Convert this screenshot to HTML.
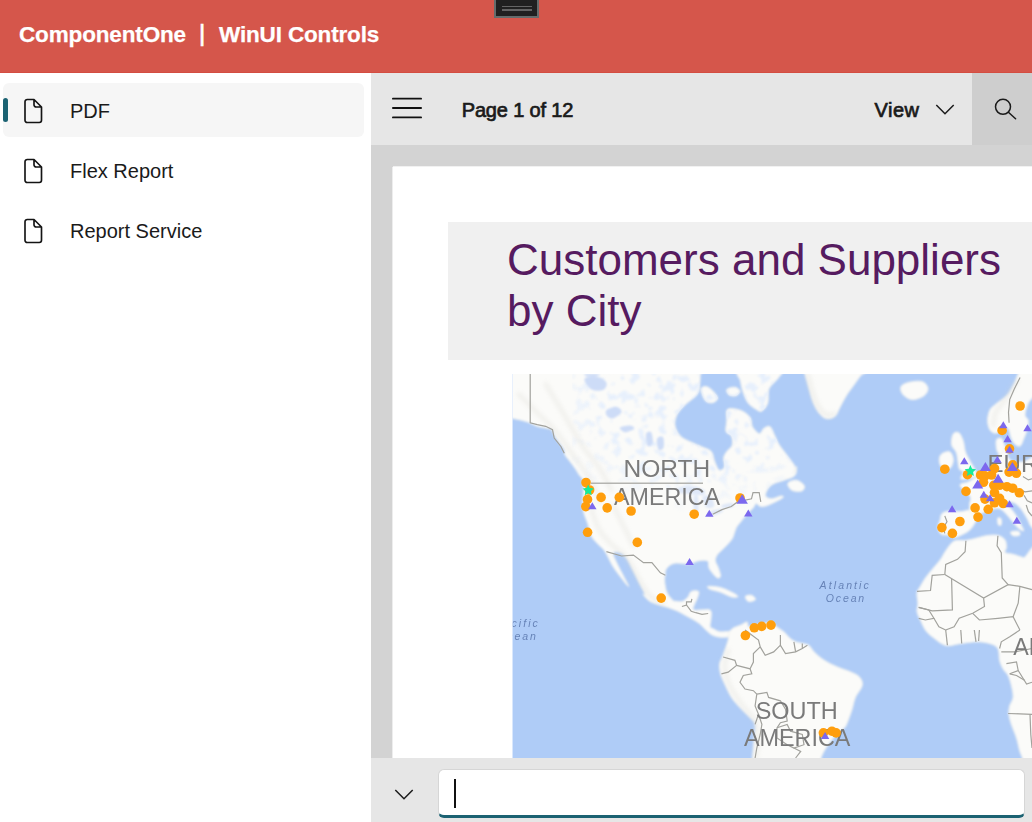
<!DOCTYPE html>
<html lang="en">
<head>
<meta charset="utf-8">
<title>ComponentOne | WinUI Controls</title>
<style>
  html, body { margin: 0; padding: 0; }
  body {
    width: 1032px; height: 822px; overflow: hidden; position: relative;
    background: #ffffff;
    font-family: "Liberation Sans", sans-serif;
    color: #1a1a1a;
  }
  .abs { position: absolute; }
  #header { left: 0; top: 0; width: 1032px; height: 73px; background: #D5564B; box-sizing: border-box; border-bottom: 1px solid #d44d41; }
  #title, .ttl {
    left: 19px; top: 19.500px; height: 30px; line-height: 30px; white-space: nowrap;
    color: #ffffff; font-weight: bold; font-size: 22.500px; letter-spacing: -0.15px; -webkit-text-stroke: 0.25px #ffffff;
  }
  #grip { left: 494px; top: -2px; width: 41px; height: 16px; background: #202020; border: 2px solid #646c6c; }
  #grip i { position: absolute; left: 6px; width: 30px; height: 1.700px; background: #646464; }
  #nav { left: 0; top: 73px; width: 371px; height: 749px; background: #ffffff; }
  .item { position: absolute; left: 3px; width: 361px; height: 54px; border-radius: 6px; }
  .item.sel { background: #f6f6f6; }
  .item .bar { position: absolute; left: 0; top: 15px; width: 5px; height: 24px; border-radius: 3px; background: #1b6272; }
  .item svg { position: absolute; left: 17px; top: 15px; }
  .item span { position: absolute; left: 67px; top: 13px; line-height: 30px; font-size: 20px; white-space: nowrap; }
  #toolbar { left: 371px; top: 73px; width: 661px; height: 72px; background: #e6e6e6; }
  #searchbtn { left: 972px; top: 73px; width: 60px; height: 72px; background: #cecece; }
  #content { left: 371px; top: 145px; width: 661px; height: 613px; background: #d3d3d3; overflow: hidden; }
  #page { left: 393px; top: 167px; width: 639px; height: 591px; background: #ffffff; box-shadow: -1px 0 0 #ededed, 0 -1px 0 #f1f1f1; }
  #banner { left: 448px; top: 222px; width: 584px; height: 138.4px; background: #f0f0f0; }
  #h1 {
    left: 507px; top: 235px; font-size: 44px; line-height: 50.6px; color: #561b60; white-space: nowrap;
  }
  #map { left: 512px; top: 374px; width: 520px; height: 384px; background: #aecbf6; overflow: hidden; }
  #bottom { left: 371px; top: 758px; width: 661px; height: 64px; background: #e6e6e6; }
  #input { left: 437.600px; top: 769.400px; width: 587.700px; height: 48.500px; box-sizing: border-box; background: #ffffff;
     border: 1.300px solid #d6d6d6; border-bottom: 3px solid #1b6272; border-radius: 6px; }
  #caret { left: 454px; top: 779px; width: 2px; height: 29px; background: #111; }
  .tb { font-size: 20px; font-weight: normal; -webkit-text-stroke: 0.700px #1a1a1a; color: #1a1a1a; white-space: nowrap; line-height: 30px; }
</style>
</head>
<body>
<div id="header" class="abs"></div>
<div id="title" class="abs">ComponentOne</div>
<div class="abs ttl" style="left:199px;top:17.500px;font-weight:normal;-webkit-text-stroke:0.700px #fff;font-size:24px">|</div>
<div class="abs ttl" style="left:219px">WinUI Controls</div>
<div id="grip" class="abs"><i style="top:5.800px"></i><i style="top:9px"></i></div>

<div id="nav" class="abs">
  <div class="item sel" style="top:10px"><div class="bar"></div>
    <svg width="24" height="26" viewBox="0 0 24 26" fill="none" stroke="#141414" stroke-width="1.650" stroke-linejoin="round"><path d="M7.200 1.500H14L21.500 9V22.300A2.200 2.200 0 0 1 19.300 24.500H7.200A2.200 2.200 0 0 1 5 22.300V3.700A2.200 2.200 0 0 1 7.200 1.500ZM14 1.500V6.800A2.200 2.200 0 0 0 16.200 9H21.500"/></svg>
    <span>PDF</span></div>
  <div class="item" style="top:70px">
    <svg width="24" height="26" viewBox="0 0 24 26" fill="none" stroke="#141414" stroke-width="1.650" stroke-linejoin="round"><path d="M7.200 1.500H14L21.500 9V22.300A2.200 2.200 0 0 1 19.300 24.500H7.200A2.200 2.200 0 0 1 5 22.300V3.700A2.200 2.200 0 0 1 7.200 1.500ZM14 1.500V6.800A2.200 2.200 0 0 0 16.200 9H21.500"/></svg>
    <span>Flex Report</span></div>
  <div class="item" style="top:130px">
    <svg width="24" height="26" viewBox="0 0 24 26" fill="none" stroke="#141414" stroke-width="1.650" stroke-linejoin="round"><path d="M7.200 1.500H14L21.500 9V22.300A2.200 2.200 0 0 1 19.300 24.500H7.200A2.200 2.200 0 0 1 5 22.300V3.700A2.200 2.200 0 0 1 7.200 1.500ZM14 1.500V6.800A2.200 2.200 0 0 0 16.200 9H21.500"/></svg>
    <span>Report Service</span></div>
</div>

<div id="toolbar" class="abs"></div>
<div id="searchbtn" class="abs"></div>
<svg class="abs" style="left:391px;top:97px" width="32" height="22" viewBox="0 0 32 22" stroke="#111" stroke-width="1.800" stroke-linecap="round" fill="none"><path d="M1.900 1.700H30.100M1.900 11H30.100M1.900 20.400H30.100"/></svg>
<div class="abs tb" style="left:461.700px;top:95.200px;letter-spacing:-0.15px">Page 1 of 12</div>
<div class="abs tb" style="left:874.500px;top:94.800px;letter-spacing:0.5px">View</div>
<svg class="abs" style="left:935px;top:103px" width="20" height="13" viewBox="0 0 20 13" stroke="#1a1a1a" stroke-width="1.500" fill="none"><path d="M1.300 2L10 10.700L18.700 2"/></svg>
<svg class="abs" style="left:992px;top:96px" width="26" height="26" viewBox="0 0 26 26" stroke="#1a1a1a" stroke-width="1.500" fill="none" stroke-linecap="round"><circle cx="11" cy="10.800" r="7.500"/><path d="M16.400 16.200L23.600 22.700"/></svg>

<div id="content" class="abs"></div>
<div id="page" class="abs"></div>
<div id="banner" class="abs"></div>
<div id="h1" class="abs">Customers and Suppliers<br>by City</div>
<div id="map" class="abs">
<svg id="mapsvg" width="520" height="384" viewBox="0 0 520 384" style="display:block">
<defs><filter id="b1" x="-5%" y="-5%" width="110%" height="110%"><feGaussianBlur stdDeviation="1.1"/></filter><filter id="b2"><feGaussianBlur stdDeviation="0.6"/></filter> <filter id="sp" x="0" y="0" width="100%" height="100%"><feTurbulence type="fractalNoise" baseFrequency="0.11" numOctaves="2" seed="7" result="n"/><feColorMatrix in="n" type="matrix" values="0 0 0 0 0.80  0 0 0 0 0.87  0 0 0 0 0.975  0 0 0 8 -4.3"/><feGaussianBlur stdDeviation="0.8"/></filter><radialGradient id="spg" cx="0.55" cy="0.3" r="0.7"><stop offset="0.6" stop-color="#fff"/><stop offset="1" stop-color="#000"/></radialGradient><mask id="spm" maskUnits="userSpaceOnUse" x="60" y="-10" width="225" height="150"><rect x="60" y="-10" width="225" height="150" fill="url(#spg)"/></mask><filter id="b3" x="-20%" y="-20%" width="140%" height="140%"><feGaussianBlur stdDeviation="2.2"/></filter></defs>
<rect x="0" y="0" width="520" height="384" fill="#afccf7"/>
<g filter="url(#b1)" fill="#fbfbf9" stroke="#f3f3ef" stroke-width="1">
<path d="M-6.0 -6.0C26.5 -14.3 156.1 -7.2 188.5 -6.2C220.8 -5.2 188.3 -2.6 188.2 0.0C188.0 2.6 188.2 5.9 187.7 9.3C187.2 12.7 187.8 16.5 185.4 20.2C182.9 23.8 176.3 27.6 173.0 31.0C169.6 34.4 166.9 37.0 165.2 40.3C163.5 43.7 162.4 47.5 162.9 51.2C163.4 54.8 165.6 59.2 168.3 62.0C171.0 64.9 175.5 66.4 179.2 68.2C182.8 70.0 186.7 71.3 190.0 72.9C193.4 74.4 197.3 75.2 199.3 77.5C201.4 79.8 201.1 83.7 202.4 86.8C203.7 89.9 205.4 95.1 207.1 96.1C208.7 97.2 211.7 95.1 212.5 93.0C213.3 91.0 211.3 86.3 211.7 83.7C212.1 81.1 213.4 79.6 214.8 77.5C216.2 75.5 219.5 73.9 220.2 71.3C221.0 68.7 220.5 64.3 219.5 62.0C218.4 59.7 214.8 59.9 214.0 57.4C213.3 54.8 214.6 50.2 214.8 46.5C215.1 42.8 213.3 37.0 215.6 35.3C217.9 33.7 225.0 35.1 228.8 36.4C232.5 37.8 236.1 40.7 238.1 43.4C240.0 46.1 238.9 50.0 240.4 52.7C242.0 55.4 245.4 59.4 247.4 59.7C249.3 59.9 250.2 55.4 252.0 54.3C253.8 53.1 256.4 51.4 258.2 52.7C260.0 54.0 261.3 58.9 262.9 62.0C264.4 65.1 265.2 67.7 267.5 71.3C269.9 74.9 274.3 80.1 276.8 83.7C279.4 87.3 282.3 90.4 283.0 93.0C283.8 95.6 281.3 99.4 281.5 99.2C281.7 99.1 284.2 91.8 284.4 92.2C284.7 92.6 285.0 99.2 282.9 101.5C280.8 103.8 275.4 104.9 272.0 106.2C268.7 107.4 265.3 108.0 262.7 109.3C260.1 110.5 258.1 111.8 256.5 113.9C255.0 116.0 252.9 119.9 253.4 121.7C253.9 123.5 257.0 124.7 259.6 124.8C262.2 124.8 267.1 122.1 268.9 122.0C270.7 121.8 272.5 122.5 270.5 124.0C268.4 125.5 260.1 129.5 256.5 131.0C252.9 132.4 250.8 132.8 248.8 132.5C246.7 132.3 245.4 129.2 244.1 129.4C242.8 129.7 242.6 132.3 241.0 134.1C239.5 135.9 236.9 137.9 234.8 140.3C232.8 142.6 230.4 145.7 228.6 148.0C226.8 150.3 225.3 151.6 224.0 154.2C222.7 156.8 222.2 160.9 220.9 163.5C219.6 166.1 218.0 167.7 216.2 169.7C214.4 171.8 211.8 174.1 210.0 175.9C208.2 177.7 206.5 178.8 205.4 180.6C204.3 182.4 203.1 184.4 203.3 186.8C203.6 189.1 205.8 191.9 206.6 194.5C207.5 197.1 208.8 200.8 208.5 202.3C208.2 203.8 206.6 204.8 204.7 203.5C202.9 202.2 198.8 197.3 197.3 194.5C195.8 191.8 197.5 188.4 195.8 187.1C194.0 185.8 189.8 186.3 186.8 186.8C183.7 187.2 181.3 189.5 177.5 189.9C173.6 190.3 167.1 188.6 163.5 189.1C159.9 189.6 157.6 191.3 155.8 193.0C153.9 194.7 153.0 198.2 152.7 199.2C152.3 200.2 153.4 197.5 153.4 198.8C153.4 200.2 152.3 203.9 152.6 207.2C152.9 210.6 153.6 215.7 155.1 219.0C156.7 222.4 160.7 226.1 161.9 227.5C163.0 228.8 160.8 227.1 162.1 227.1C163.4 227.1 167.5 228.2 169.9 227.6C172.2 226.9 174.5 224.6 176.1 222.9C177.6 221.2 177.4 218.4 179.2 217.5C180.9 216.6 185.6 216.3 186.6 217.5C187.6 218.7 185.8 222.6 185.1 224.8C184.3 227.0 182.9 228.8 182.3 230.7C181.7 232.5 180.2 235.0 181.5 235.9C182.8 236.8 187.2 235.8 190.0 235.9C192.9 236.0 197.0 234.9 198.5 236.4C200.0 237.9 199.1 242.3 199.0 244.9C198.9 247.6 197.6 250.7 198.1 252.4C198.5 254.0 200.1 254.1 201.6 255.0C203.2 255.9 205.2 257.3 207.4 257.8C209.6 258.2 212.8 257.7 214.8 257.6C216.8 257.6 218.9 256.5 219.5 257.3C220.0 258.1 220.0 261.3 218.2 262.3C216.4 263.3 211.6 263.4 208.6 263.2C205.6 263.0 202.7 262.3 200.2 261.0C197.8 259.8 195.9 257.7 193.7 255.8C191.6 253.9 189.8 251.4 187.5 249.6C185.3 247.8 182.6 246.4 180.1 244.9C177.6 243.5 175.1 242.2 172.7 240.9C170.2 239.5 168.0 238.1 165.2 236.9C162.4 235.6 159.3 234.6 155.9 233.4C152.5 232.3 148.2 231.3 145.1 230.2C142.0 229.1 139.6 228.6 137.3 226.9C135.0 225.3 131.8 221.5 131.1 220.4C130.4 219.3 133.8 222.3 133.2 220.4C132.6 218.5 129.3 212.8 127.3 208.9C125.3 205.1 123.5 201.2 121.4 197.1C119.3 193.1 116.9 187.6 114.7 184.5C112.4 181.4 110.2 179.4 107.9 178.6C105.7 177.7 101.5 177.3 101.2 179.4C100.8 181.5 104.1 187.4 105.9 191.2C107.6 195.0 109.8 198.6 111.6 202.2C113.4 205.8 117.1 212.4 116.7 212.6C116.3 212.9 111.9 207.3 109.3 203.9C106.6 200.4 103.6 196.6 100.8 192.1C98.1 187.6 95.2 180.5 92.7 176.9C90.3 173.2 88.2 172.7 86.0 170.2C83.7 167.6 80.9 165.1 79.2 161.7C77.6 158.3 77.1 153.9 75.9 149.9C74.6 146.0 72.5 141.8 71.7 138.1C70.8 134.5 70.8 131.9 70.8 128.0C70.8 124.1 71.7 118.4 71.7 114.7C71.7 110.9 71.5 107.6 70.8 105.4C70.1 103.1 68.7 103.0 67.4 101.2C66.2 99.3 64.8 96.7 63.2 94.4C61.7 92.2 59.9 89.9 58.2 87.7C56.5 85.4 54.1 82.9 53.1 80.9C52.1 79.0 53.0 77.6 52.3 75.9C51.6 74.2 50.4 73.1 48.9 70.8C47.3 68.6 44.5 64.9 43.0 62.4C41.4 59.9 41.2 57.0 39.6 55.6C38.1 54.2 36.1 54.5 33.7 54.0C31.3 53.4 27.9 53.1 25.3 52.3C22.7 51.4 20.7 49.9 18.2 48.9C15.7 47.9 13.2 47.2 10.1 46.4C7.1 45.6 2.8 44.7 0.0 44.2C-2.8 43.7 -5.7 51.9 -6.7 43.5C-7.7 35.1 -38.5 2.3 -6.0 -6.0Z"/>
<path d="M189.2 14.7C189.8 12.5 193.5 11.8 196.2 13.2C198.9 14.6 204.7 20.7 205.5 23.3C206.3 25.8 202.9 28.2 200.9 28.7C198.8 29.2 195.1 28.7 193.1 26.4C191.2 24.0 188.7 16.9 189.2 14.7Z"/>
<path d="M214.8 15.5C215.7 14.2 220.4 12.9 222.6 13.2C224.8 13.4 227.7 15.6 228.0 17.1C228.3 18.5 225.9 21.1 224.1 21.7C222.3 22.4 218.7 22.0 217.1 20.9C215.6 19.9 213.9 16.8 214.8 15.5Z"/>
<path d="M227.2 -4.7C233.9 -6.6 261.7 -6.0 268.3 -4.7C274.9 -3.3 268.6 0.2 266.8 3.4C264.9 6.6 258.8 10.5 257.0 14.7C255.2 19.0 257.0 25.2 255.8 29.0C254.5 32.7 251.7 36.2 249.7 37.2C247.7 38.2 245.7 36.3 243.5 35.0C241.3 33.7 238.3 31.4 236.5 29.5C234.8 27.5 234.1 25.6 233.1 23.3C232.1 20.9 231.1 18.2 230.3 15.5C229.6 12.8 229.0 10.3 228.5 7.0C227.9 3.6 220.6 -2.7 227.2 -4.7Z"/>
<path d="M292.0 -6.7C302.5 -7.9 346.7 -8.1 356.1 -6.7C365.5 -5.3 350.9 -1.1 348.7 1.7C346.4 4.5 345.0 6.7 342.6 10.1C340.2 13.5 336.6 18.0 334.2 21.9C331.7 25.9 329.6 30.3 327.8 33.7C325.9 37.1 325.4 40.3 323.2 42.2C321.1 44.0 317.4 45.1 314.8 44.7C312.2 44.3 309.8 42.3 307.5 39.6C305.3 37.0 303.1 33.0 301.3 28.7C299.5 24.3 298.1 18.3 296.7 13.5C295.4 8.7 293.8 3.4 293.0 0.0C292.2 -3.4 281.5 -5.6 292.0 -6.7Z"/>
<path d="M275.9 109.3C276.7 107.6 281.7 105.8 284.4 106.2C287.1 106.5 291.3 109.8 292.2 111.6C293.1 113.4 291.9 116.2 289.9 117.0C287.8 117.8 282.1 117.5 279.8 116.2C277.5 114.9 275.1 110.9 275.9 109.3Z"/>
<path d="M389.0 12.6C390.0 10.7 393.1 9.3 396.6 8.4C400.1 7.6 406.8 6.6 410.1 7.6C413.3 8.6 415.7 11.9 416.0 14.3C416.3 16.7 414.4 20.0 411.8 21.9C409.1 23.8 403.5 25.9 400.0 25.6C396.4 25.3 392.5 22.4 390.7 20.2C388.9 18.1 388.0 14.6 389.0 12.6Z"/>
<path d="M196.2 212.4C198.0 212.1 204.5 212.5 208.6 213.6C212.8 214.7 218.1 217.4 221.0 218.9C223.9 220.4 226.2 221.9 226.0 222.6C225.7 223.3 222.4 223.6 219.5 222.9C216.6 222.2 212.2 219.5 208.6 218.2C205.0 217.0 199.8 216.1 197.8 215.1C195.7 214.2 194.4 212.6 196.2 212.4Z"/>
<path d="M233.4 222.4C233.9 221.4 237.9 220.8 239.6 221.3C241.3 221.9 244.0 224.5 243.5 225.5C243.0 226.6 238.2 228.1 236.5 227.6C234.8 227.0 232.9 223.5 233.4 222.4Z"/>
<path d="M217.1 258.9C218.0 256.9 219.1 255.5 221.0 254.2C223.0 252.9 226.4 252.1 228.8 251.1C231.1 250.1 233.7 247.8 235.0 248.0C236.3 248.3 235.2 252.1 236.5 252.7C237.8 253.2 240.1 251.6 242.7 251.1C245.3 250.6 249.2 250.1 252.0 249.6C254.9 249.0 257.7 247.5 259.8 248.0C261.9 248.5 262.4 251.0 264.4 252.7C266.5 254.3 270.0 256.2 272.2 258.1C274.4 260.0 275.7 262.4 277.6 264.0C279.6 265.6 281.4 266.9 283.8 267.9C286.2 268.8 289.8 269.2 292.0 269.8C294.2 270.4 295.4 270.2 297.1 271.5C298.8 272.9 299.6 275.4 302.1 277.9C304.7 280.4 308.3 283.8 312.3 286.3C316.2 288.9 321.2 291.1 325.7 293.1C330.2 295.1 335.6 296.5 339.2 298.2C342.9 299.8 345.8 301.0 347.7 303.2C349.5 305.5 350.9 308.3 350.2 311.6C349.5 315.0 345.1 319.5 343.4 323.4C341.8 327.4 341.3 331.3 340.1 335.2C338.8 339.2 337.1 344.0 335.9 347.0C334.6 350.1 334.5 351.5 332.5 353.8C330.5 356.0 326.3 358.3 324.1 360.5C321.8 362.8 320.7 365.0 319.0 367.3C317.3 369.5 315.6 371.2 313.9 374.0C312.3 376.8 310.0 380.6 308.9 384.0C307.8 387.3 318.6 392.5 307.2 394.3C295.8 396.0 251.7 396.0 240.6 394.3C229.5 392.5 240.5 387.3 240.6 384.0C240.7 380.6 241.2 377.4 241.4 374.0C241.7 370.7 242.0 367.8 242.3 363.9C242.6 360.0 243.8 353.8 243.1 350.4C242.4 347.0 240.6 346.5 238.1 343.7C235.5 340.9 231.0 336.9 228.0 333.6C224.9 330.2 222.1 327.4 219.5 323.4C217.0 319.5 214.6 313.9 212.8 310.0C211.0 306.0 209.4 303.2 208.6 299.8C207.7 296.5 207.3 292.8 207.7 289.7C208.1 286.6 209.7 285.2 211.1 281.3C212.5 277.4 215.1 269.9 216.2 266.1C217.2 262.4 216.3 260.9 217.1 258.9Z"/>
<path d="M442.1 167.1C445.5 165.4 450.3 166.9 453.9 166.4C457.6 166.0 460.7 165.0 464.0 164.2C467.4 163.5 470.5 162.2 474.1 161.7C477.8 161.2 482.8 160.7 485.9 161.4C489.1 162.1 491.6 163.9 493.0 165.9C494.4 168.0 494.4 171.4 494.4 173.5C494.4 175.6 491.9 177.5 493.0 178.6C494.1 179.7 498.1 179.4 501.1 180.3C504.2 181.1 506.7 182.2 511.2 183.6C515.7 185.0 525.3 153.6 528.1 188.7C530.9 223.8 530.8 360.0 528.1 394.3C525.4 428.5 515.0 396.0 512.1 394.3C509.1 392.5 511.1 386.8 510.4 384.0C509.7 381.2 508.8 380.7 507.9 377.4C506.9 374.1 505.9 368.4 504.5 363.9C503.1 359.4 500.7 354.4 499.4 350.4C498.2 346.5 497.2 343.4 496.9 340.3C496.6 337.2 497.0 334.7 497.7 331.9C498.4 329.1 500.8 326.8 501.1 323.4C501.4 320.1 500.3 315.3 499.4 311.6C498.6 308.0 497.5 304.3 496.1 301.5C494.7 298.7 492.4 297.3 491.0 294.8C489.6 292.3 488.5 289.7 487.6 286.3C486.8 283.0 487.6 277.4 485.9 274.5C484.3 271.7 481.2 270.6 477.5 269.5C473.9 268.4 469.1 267.7 464.0 267.8C459.0 267.9 452.2 269.2 447.2 269.8C442.1 270.4 438.2 272.7 433.7 271.5C429.2 270.3 423.6 265.3 420.2 262.7C416.8 260.2 415.4 258.8 413.4 256.0C411.5 253.2 409.8 249.1 408.4 246.0C407.0 243.0 405.4 240.4 405.0 237.6C404.6 234.8 405.9 232.3 405.9 229.2C405.9 226.1 404.6 221.9 405.0 219.0C405.4 216.2 407.0 214.8 408.4 212.3C409.8 209.8 411.5 206.7 413.4 203.9C415.4 201.1 417.7 198.5 420.2 195.4C422.7 192.4 426.4 188.4 428.6 185.3C430.9 182.2 431.4 179.9 433.7 176.9C435.9 173.9 438.7 168.9 442.1 167.1Z"/>
<path d="M429.9 139.7C431.3 138.2 433.5 137.6 436.5 137.2C439.5 136.9 444.5 138.0 448.2 137.8C451.8 137.6 455.4 135.8 458.4 136.1C461.4 136.4 465.7 137.5 466.4 139.7C467.2 141.9 464.3 146.4 462.8 149.2C461.2 152.0 459.4 154.6 457.2 156.5C455.0 158.5 452.1 159.7 449.6 160.9C447.2 162.1 444.5 163.5 442.3 163.5C440.1 163.6 438.7 161.7 436.5 161.2C434.3 160.6 430.9 161.4 429.2 160.2C427.4 158.9 426.2 155.9 426.0 153.6C425.8 151.3 427.4 148.6 428.0 146.3C428.7 144.0 428.5 141.2 429.9 139.7Z"/>
<path d="M448.2 110.5C448.9 109.3 453.3 109.2 455.5 108.3C457.7 107.4 459.5 106.1 461.3 105.1C463.1 104.1 464.8 103.3 466.4 102.2C468.0 101.2 469.2 100.0 470.8 98.8C472.4 97.7 474.1 96.5 475.9 95.2C477.7 93.9 480.0 92.6 481.8 91.1C483.5 89.6 485.2 89.2 486.1 86.4C487.1 83.7 486.4 77.2 487.6 74.8C488.8 72.3 492.0 70.4 493.4 71.8C494.9 73.3 494.9 80.8 496.4 83.5C497.8 86.2 499.8 87.2 502.2 87.9C504.6 88.6 506.1 88.1 510.9 87.9C515.8 87.7 528.0 74.5 531.4 86.4C534.8 98.4 533.3 148.2 531.4 159.4C529.5 170.6 522.7 156.0 520.0 153.6C517.3 151.2 517.2 148.0 515.3 144.8C513.5 141.7 510.9 137.3 508.8 134.6C506.6 131.9 504.5 130.0 502.2 128.8C499.9 127.6 495.8 126.8 494.9 127.3C494.0 127.8 495.3 129.9 496.6 132.0C498.0 134.1 501.0 136.8 502.9 139.7C504.9 142.6 506.9 146.7 508.3 149.5C509.8 152.4 512.0 156.0 511.7 156.8C511.4 157.6 508.4 155.8 506.6 154.3C504.7 152.8 502.9 150.3 500.7 147.8C498.5 145.2 495.6 141.2 493.4 139.0C491.2 136.8 489.3 135.3 487.6 134.6C485.9 133.9 484.9 134.3 483.2 134.6C481.5 134.9 479.6 135.6 477.4 136.4C475.2 137.1 472.1 138.1 470.1 139.0C468.0 139.9 466.9 141.9 465.0 141.9C463.0 141.9 459.6 140.9 458.4 139.0C457.2 137.0 457.7 132.9 457.7 130.2C457.7 127.6 459.5 125.4 458.4 122.9C457.3 120.5 452.8 117.7 451.1 115.6C449.4 113.6 447.4 111.7 448.2 110.5Z"/>
<path d="M509.9 -4.7C505.6 -2.3 504.7 5.0 502.3 9.3C499.9 13.6 498.4 17.4 495.3 20.9C492.2 24.4 486.6 27.7 483.7 30.2C480.8 32.8 479.3 33.3 477.9 36.0C476.6 38.8 475.6 43.2 475.6 46.5C475.6 49.8 476.6 53.7 477.9 55.8C479.3 57.9 481.4 59.3 483.7 59.3C486.0 59.3 489.7 56.6 491.9 55.8C494.0 55.0 495.3 53.5 496.5 54.7C497.7 55.8 497.9 60.3 498.8 62.8C499.8 65.3 500.8 68.2 502.3 69.8C503.9 71.3 506.6 72.9 508.1 72.1C509.7 71.3 510.5 67.8 511.6 65.1C512.8 62.4 514.3 58.9 515.1 55.8C515.9 52.7 516.6 49.0 516.3 46.5C515.9 44.0 513.0 43.6 513.0 40.7C513.0 37.8 515.0 32.0 516.3 29.1C517.6 26.2 519.0 26.2 520.9 23.3C522.9 20.3 526.7 16.3 527.9 11.6C529.1 7.0 530.9 -1.9 527.9 -4.7C524.9 -7.4 514.1 -7.0 509.9 -4.7Z"/>
<path d="M484.3 66.3C485.0 64.1 488.2 63.6 489.5 64.5C490.9 65.5 492.2 69.7 492.4 72.1C492.6 74.5 491.9 78.1 490.7 79.1C489.5 80.0 486.5 80.0 485.5 77.9C484.4 75.8 483.6 68.5 484.3 66.3Z"/>
<path d="M441.3 59.9C442.5 57.9 445.5 57.7 447.2 59.0C448.8 60.3 450.3 64.1 451.4 67.4C452.5 70.8 452.1 74.7 453.9 79.2C455.7 83.7 460.5 90.8 462.3 94.4C464.2 98.1 465.7 99.5 464.9 101.2C464.0 102.8 459.9 103.6 457.3 104.2C454.6 104.8 449.8 105.9 448.8 104.9C447.9 103.8 451.7 99.5 451.4 97.8C451.1 96.0 448.3 97.5 447.2 94.4C446.0 91.3 445.9 83.2 444.6 79.2C443.4 75.3 440.1 74.0 439.6 70.8C439.0 67.6 440.0 61.8 441.3 59.9Z"/>
<path d="M429.5 80.1C431.2 78.6 435.9 76.9 437.9 77.9C439.9 78.9 441.3 83.2 441.3 86.0C441.3 88.7 439.7 93.2 437.9 94.4C436.1 95.7 432.1 94.8 430.3 93.6C428.5 92.3 427.4 89.1 427.3 86.8C427.1 84.6 427.7 81.6 429.5 80.1Z"/>
<path d="M485.7 144.2C486.2 143.2 488.4 143.6 489.0 144.7C489.6 145.8 489.7 149.8 489.2 150.8C488.8 151.8 486.8 151.9 486.3 150.8C485.7 149.7 485.3 145.2 485.7 144.2Z"/>
<path d="M498.9 157.9C499.8 157.2 505.1 156.8 506.5 157.3C508.0 157.9 508.5 160.4 507.6 161.2C506.7 161.9 502.5 162.3 501.1 161.7C499.6 161.2 497.9 158.6 498.9 157.9Z"/>
</g>
<clipPath id="lc"><path d="M-6.0 -6.0C26.5 -14.3 156.1 -7.2 188.5 -6.2C220.8 -5.2 188.3 -2.6 188.2 0.0C188.0 2.6 188.2 5.9 187.7 9.3C187.2 12.7 187.8 16.5 185.4 20.2C182.9 23.8 176.3 27.6 173.0 31.0C169.6 34.4 166.9 37.0 165.2 40.3C163.5 43.7 162.4 47.5 162.9 51.2C163.4 54.8 165.6 59.2 168.3 62.0C171.0 64.9 175.5 66.4 179.2 68.2C182.8 70.0 186.7 71.3 190.0 72.9C193.4 74.4 197.3 75.2 199.3 77.5C201.4 79.8 201.1 83.7 202.4 86.8C203.7 89.9 205.4 95.1 207.1 96.1C208.7 97.2 211.7 95.1 212.5 93.0C213.3 91.0 211.3 86.3 211.7 83.7C212.1 81.1 213.4 79.6 214.8 77.5C216.2 75.5 219.5 73.9 220.2 71.3C221.0 68.7 220.5 64.3 219.5 62.0C218.4 59.7 214.8 59.9 214.0 57.4C213.3 54.8 214.6 50.2 214.8 46.5C215.1 42.8 213.3 37.0 215.6 35.3C217.9 33.7 225.0 35.1 228.8 36.4C232.5 37.8 236.1 40.7 238.1 43.4C240.0 46.1 238.9 50.0 240.4 52.7C242.0 55.4 245.4 59.4 247.4 59.7C249.3 59.9 250.2 55.4 252.0 54.3C253.8 53.1 256.4 51.4 258.2 52.7C260.0 54.0 261.3 58.9 262.9 62.0C264.4 65.1 265.2 67.7 267.5 71.3C269.9 74.9 274.3 80.1 276.8 83.7C279.4 87.3 282.3 90.4 283.0 93.0C283.8 95.6 281.3 99.4 281.5 99.2C281.7 99.1 284.2 91.8 284.4 92.2C284.7 92.6 285.0 99.2 282.9 101.5C280.8 103.8 275.4 104.9 272.0 106.2C268.7 107.4 265.3 108.0 262.7 109.3C260.1 110.5 258.1 111.8 256.5 113.9C255.0 116.0 252.9 119.9 253.4 121.7C253.9 123.5 257.0 124.7 259.6 124.8C262.2 124.8 267.1 122.1 268.9 122.0C270.7 121.8 272.5 122.5 270.5 124.0C268.4 125.5 260.1 129.5 256.5 131.0C252.9 132.4 250.8 132.8 248.8 132.5C246.7 132.3 245.4 129.2 244.1 129.4C242.8 129.7 242.6 132.3 241.0 134.1C239.5 135.9 236.9 137.9 234.8 140.3C232.8 142.6 230.4 145.7 228.6 148.0C226.8 150.3 225.3 151.6 224.0 154.2C222.7 156.8 222.2 160.9 220.9 163.5C219.6 166.1 218.0 167.7 216.2 169.7C214.4 171.8 211.8 174.1 210.0 175.9C208.2 177.7 206.5 178.8 205.4 180.6C204.3 182.4 203.1 184.4 203.3 186.8C203.6 189.1 205.8 191.9 206.6 194.5C207.5 197.1 208.8 200.8 208.5 202.3C208.2 203.8 206.6 204.8 204.7 203.5C202.9 202.2 198.8 197.3 197.3 194.5C195.8 191.8 197.5 188.4 195.8 187.1C194.0 185.8 189.8 186.3 186.8 186.8C183.7 187.2 181.3 189.5 177.5 189.9C173.6 190.3 167.1 188.6 163.5 189.1C159.9 189.6 157.6 191.3 155.8 193.0C153.9 194.7 153.0 198.2 152.7 199.2C152.3 200.2 153.4 197.5 153.4 198.8C153.4 200.2 152.3 203.9 152.6 207.2C152.9 210.6 153.6 215.7 155.1 219.0C156.7 222.4 160.7 226.1 161.9 227.5C163.0 228.8 160.8 227.1 162.1 227.1C163.4 227.1 167.5 228.2 169.9 227.6C172.2 226.9 174.5 224.6 176.1 222.9C177.6 221.2 177.4 218.4 179.2 217.5C180.9 216.6 185.6 216.3 186.6 217.5C187.6 218.7 185.8 222.6 185.1 224.8C184.3 227.0 182.9 228.8 182.3 230.7C181.7 232.5 180.2 235.0 181.5 235.9C182.8 236.8 187.2 235.8 190.0 235.9C192.9 236.0 197.0 234.9 198.5 236.4C200.0 237.9 199.1 242.3 199.0 244.9C198.9 247.6 197.6 250.7 198.1 252.4C198.5 254.0 200.1 254.1 201.6 255.0C203.2 255.9 205.2 257.3 207.4 257.8C209.6 258.2 212.8 257.7 214.8 257.6C216.8 257.6 218.9 256.5 219.5 257.3C220.0 258.1 220.0 261.3 218.2 262.3C216.4 263.3 211.6 263.4 208.6 263.2C205.6 263.0 202.7 262.3 200.2 261.0C197.8 259.8 195.9 257.7 193.7 255.8C191.6 253.9 189.8 251.4 187.5 249.6C185.3 247.8 182.6 246.4 180.1 244.9C177.6 243.5 175.1 242.2 172.7 240.9C170.2 239.5 168.0 238.1 165.2 236.9C162.4 235.6 159.3 234.6 155.9 233.4C152.5 232.3 148.2 231.3 145.1 230.2C142.0 229.1 139.6 228.6 137.3 226.9C135.0 225.3 131.8 221.5 131.1 220.4C130.4 219.3 133.8 222.3 133.2 220.4C132.6 218.5 129.3 212.8 127.3 208.9C125.3 205.1 123.5 201.2 121.4 197.1C119.3 193.1 116.9 187.6 114.7 184.5C112.4 181.4 110.2 179.4 107.9 178.6C105.7 177.7 101.5 177.3 101.2 179.4C100.8 181.5 104.1 187.4 105.9 191.2C107.6 195.0 109.8 198.6 111.6 202.2C113.4 205.8 117.1 212.4 116.7 212.6C116.3 212.9 111.9 207.3 109.3 203.9C106.6 200.4 103.6 196.6 100.8 192.1C98.1 187.6 95.2 180.5 92.7 176.9C90.3 173.2 88.2 172.7 86.0 170.2C83.7 167.6 80.9 165.1 79.2 161.7C77.6 158.3 77.1 153.9 75.9 149.9C74.6 146.0 72.5 141.8 71.7 138.1C70.8 134.5 70.8 131.9 70.8 128.0C70.8 124.1 71.7 118.4 71.7 114.7C71.7 110.9 71.5 107.6 70.8 105.4C70.1 103.1 68.7 103.0 67.4 101.2C66.2 99.3 64.8 96.7 63.2 94.4C61.7 92.2 59.9 89.9 58.2 87.7C56.5 85.4 54.1 82.9 53.1 80.9C52.1 79.0 53.0 77.6 52.3 75.9C51.6 74.2 50.4 73.1 48.9 70.8C47.3 68.6 44.5 64.9 43.0 62.4C41.4 59.9 41.2 57.0 39.6 55.6C38.1 54.2 36.1 54.5 33.7 54.0C31.3 53.4 27.9 53.1 25.3 52.3C22.7 51.4 20.7 49.9 18.2 48.9C15.7 47.9 13.2 47.2 10.1 46.4C7.1 45.6 2.8 44.7 0.0 44.2C-2.8 43.7 -5.7 51.9 -6.7 43.5C-7.7 35.1 -38.5 2.3 -6.0 -6.0Z"/><path d="M189.2 14.7C189.8 12.5 193.5 11.8 196.2 13.2C198.9 14.6 204.7 20.7 205.5 23.3C206.3 25.8 202.9 28.2 200.9 28.7C198.8 29.2 195.1 28.7 193.1 26.4C191.2 24.0 188.7 16.9 189.2 14.7Z"/><path d="M214.8 15.5C215.7 14.2 220.4 12.9 222.6 13.2C224.8 13.4 227.7 15.6 228.0 17.1C228.3 18.5 225.9 21.1 224.1 21.7C222.3 22.4 218.7 22.0 217.1 20.9C215.6 19.9 213.9 16.8 214.8 15.5Z"/><path d="M227.2 -4.7C233.9 -6.6 261.7 -6.0 268.3 -4.7C274.9 -3.3 268.6 0.2 266.8 3.4C264.9 6.6 258.8 10.5 257.0 14.7C255.2 19.0 257.0 25.2 255.8 29.0C254.5 32.7 251.7 36.2 249.7 37.2C247.7 38.2 245.7 36.3 243.5 35.0C241.3 33.7 238.3 31.4 236.5 29.5C234.8 27.5 234.1 25.6 233.1 23.3C232.1 20.9 231.1 18.2 230.3 15.5C229.6 12.8 229.0 10.3 228.5 7.0C227.9 3.6 220.6 -2.7 227.2 -4.7Z"/><path d="M292.0 -6.7C302.5 -7.9 346.7 -8.1 356.1 -6.7C365.5 -5.3 350.9 -1.1 348.7 1.7C346.4 4.5 345.0 6.7 342.6 10.1C340.2 13.5 336.6 18.0 334.2 21.9C331.7 25.9 329.6 30.3 327.8 33.7C325.9 37.1 325.4 40.3 323.2 42.2C321.1 44.0 317.4 45.1 314.8 44.7C312.2 44.3 309.8 42.3 307.5 39.6C305.3 37.0 303.1 33.0 301.3 28.7C299.5 24.3 298.1 18.3 296.7 13.5C295.4 8.7 293.8 3.4 293.0 0.0C292.2 -3.4 281.5 -5.6 292.0 -6.7Z"/><path d="M275.9 109.3C276.7 107.6 281.7 105.8 284.4 106.2C287.1 106.5 291.3 109.8 292.2 111.6C293.1 113.4 291.9 116.2 289.9 117.0C287.8 117.8 282.1 117.5 279.8 116.2C277.5 114.9 275.1 110.9 275.9 109.3Z"/><path d="M389.0 12.6C390.0 10.7 393.1 9.3 396.6 8.4C400.1 7.6 406.8 6.6 410.1 7.6C413.3 8.6 415.7 11.9 416.0 14.3C416.3 16.7 414.4 20.0 411.8 21.9C409.1 23.8 403.5 25.9 400.0 25.6C396.4 25.3 392.5 22.4 390.7 20.2C388.9 18.1 388.0 14.6 389.0 12.6Z"/><path d="M196.2 212.4C198.0 212.1 204.5 212.5 208.6 213.6C212.8 214.7 218.1 217.4 221.0 218.9C223.9 220.4 226.2 221.9 226.0 222.6C225.7 223.3 222.4 223.6 219.5 222.9C216.6 222.2 212.2 219.5 208.6 218.2C205.0 217.0 199.8 216.1 197.8 215.1C195.7 214.2 194.4 212.6 196.2 212.4Z"/><path d="M233.4 222.4C233.9 221.4 237.9 220.8 239.6 221.3C241.3 221.9 244.0 224.5 243.5 225.5C243.0 226.6 238.2 228.1 236.5 227.6C234.8 227.0 232.9 223.5 233.4 222.4Z"/><path d="M217.1 258.9C218.0 256.9 219.1 255.5 221.0 254.2C223.0 252.9 226.4 252.1 228.8 251.1C231.1 250.1 233.7 247.8 235.0 248.0C236.3 248.3 235.2 252.1 236.5 252.7C237.8 253.2 240.1 251.6 242.7 251.1C245.3 250.6 249.2 250.1 252.0 249.6C254.9 249.0 257.7 247.5 259.8 248.0C261.9 248.5 262.4 251.0 264.4 252.7C266.5 254.3 270.0 256.2 272.2 258.1C274.4 260.0 275.7 262.4 277.6 264.0C279.6 265.6 281.4 266.9 283.8 267.9C286.2 268.8 289.8 269.2 292.0 269.8C294.2 270.4 295.4 270.2 297.1 271.5C298.8 272.9 299.6 275.4 302.1 277.9C304.7 280.4 308.3 283.8 312.3 286.3C316.2 288.9 321.2 291.1 325.7 293.1C330.2 295.1 335.6 296.5 339.2 298.2C342.9 299.8 345.8 301.0 347.7 303.2C349.5 305.5 350.9 308.3 350.2 311.6C349.5 315.0 345.1 319.5 343.4 323.4C341.8 327.4 341.3 331.3 340.1 335.2C338.8 339.2 337.1 344.0 335.9 347.0C334.6 350.1 334.5 351.5 332.5 353.8C330.5 356.0 326.3 358.3 324.1 360.5C321.8 362.8 320.7 365.0 319.0 367.3C317.3 369.5 315.6 371.2 313.9 374.0C312.3 376.8 310.0 380.6 308.9 384.0C307.8 387.3 318.6 392.5 307.2 394.3C295.8 396.0 251.7 396.0 240.6 394.3C229.5 392.5 240.5 387.3 240.6 384.0C240.7 380.6 241.2 377.4 241.4 374.0C241.7 370.7 242.0 367.8 242.3 363.9C242.6 360.0 243.8 353.8 243.1 350.4C242.4 347.0 240.6 346.5 238.1 343.7C235.5 340.9 231.0 336.9 228.0 333.6C224.9 330.2 222.1 327.4 219.5 323.4C217.0 319.5 214.6 313.9 212.8 310.0C211.0 306.0 209.4 303.2 208.6 299.8C207.7 296.5 207.3 292.8 207.7 289.7C208.1 286.6 209.7 285.2 211.1 281.3C212.5 277.4 215.1 269.9 216.2 266.1C217.2 262.4 216.3 260.9 217.1 258.9Z"/><path d="M442.1 167.1C445.5 165.4 450.3 166.9 453.9 166.4C457.6 166.0 460.7 165.0 464.0 164.2C467.4 163.5 470.5 162.2 474.1 161.7C477.8 161.2 482.8 160.7 485.9 161.4C489.1 162.1 491.6 163.9 493.0 165.9C494.4 168.0 494.4 171.4 494.4 173.5C494.4 175.6 491.9 177.5 493.0 178.6C494.1 179.7 498.1 179.4 501.1 180.3C504.2 181.1 506.7 182.2 511.2 183.6C515.7 185.0 525.3 153.6 528.1 188.7C530.9 223.8 530.8 360.0 528.1 394.3C525.4 428.5 515.0 396.0 512.1 394.3C509.1 392.5 511.1 386.8 510.4 384.0C509.7 381.2 508.8 380.7 507.9 377.4C506.9 374.1 505.9 368.4 504.5 363.9C503.1 359.4 500.7 354.4 499.4 350.4C498.2 346.5 497.2 343.4 496.9 340.3C496.6 337.2 497.0 334.7 497.7 331.9C498.4 329.1 500.8 326.8 501.1 323.4C501.4 320.1 500.3 315.3 499.4 311.6C498.6 308.0 497.5 304.3 496.1 301.5C494.7 298.7 492.4 297.3 491.0 294.8C489.6 292.3 488.5 289.7 487.6 286.3C486.8 283.0 487.6 277.4 485.9 274.5C484.3 271.7 481.2 270.6 477.5 269.5C473.9 268.4 469.1 267.7 464.0 267.8C459.0 267.9 452.2 269.2 447.2 269.8C442.1 270.4 438.2 272.7 433.7 271.5C429.2 270.3 423.6 265.3 420.2 262.7C416.8 260.2 415.4 258.8 413.4 256.0C411.5 253.2 409.8 249.1 408.4 246.0C407.0 243.0 405.4 240.4 405.0 237.6C404.6 234.8 405.9 232.3 405.9 229.2C405.9 226.1 404.6 221.9 405.0 219.0C405.4 216.2 407.0 214.8 408.4 212.3C409.8 209.8 411.5 206.7 413.4 203.9C415.4 201.1 417.7 198.5 420.2 195.4C422.7 192.4 426.4 188.4 428.6 185.3C430.9 182.2 431.4 179.9 433.7 176.9C435.9 173.9 438.7 168.9 442.1 167.1Z"/><path d="M429.9 139.7C431.3 138.2 433.5 137.6 436.5 137.2C439.5 136.9 444.5 138.0 448.2 137.8C451.8 137.6 455.4 135.8 458.4 136.1C461.4 136.4 465.7 137.5 466.4 139.7C467.2 141.9 464.3 146.4 462.8 149.2C461.2 152.0 459.4 154.6 457.2 156.5C455.0 158.5 452.1 159.7 449.6 160.9C447.2 162.1 444.5 163.5 442.3 163.5C440.1 163.6 438.7 161.7 436.5 161.2C434.3 160.6 430.9 161.4 429.2 160.2C427.4 158.9 426.2 155.9 426.0 153.6C425.8 151.3 427.4 148.6 428.0 146.3C428.7 144.0 428.5 141.2 429.9 139.7Z"/><path d="M448.2 110.5C448.9 109.3 453.3 109.2 455.5 108.3C457.7 107.4 459.5 106.1 461.3 105.1C463.1 104.1 464.8 103.3 466.4 102.2C468.0 101.2 469.2 100.0 470.8 98.8C472.4 97.7 474.1 96.5 475.9 95.2C477.7 93.9 480.0 92.6 481.8 91.1C483.5 89.6 485.2 89.2 486.1 86.4C487.1 83.7 486.4 77.2 487.6 74.8C488.8 72.3 492.0 70.4 493.4 71.8C494.9 73.3 494.9 80.8 496.4 83.5C497.8 86.2 499.8 87.2 502.2 87.9C504.6 88.6 506.1 88.1 510.9 87.9C515.8 87.7 528.0 74.5 531.4 86.4C534.8 98.4 533.3 148.2 531.4 159.4C529.5 170.6 522.7 156.0 520.0 153.6C517.3 151.2 517.2 148.0 515.3 144.8C513.5 141.7 510.9 137.3 508.8 134.6C506.6 131.9 504.5 130.0 502.2 128.8C499.9 127.6 495.8 126.8 494.9 127.3C494.0 127.8 495.3 129.9 496.6 132.0C498.0 134.1 501.0 136.8 502.9 139.7C504.9 142.6 506.9 146.7 508.3 149.5C509.8 152.4 512.0 156.0 511.7 156.8C511.4 157.6 508.4 155.8 506.6 154.3C504.7 152.8 502.9 150.3 500.7 147.8C498.5 145.2 495.6 141.2 493.4 139.0C491.2 136.8 489.3 135.3 487.6 134.6C485.9 133.9 484.9 134.3 483.2 134.6C481.5 134.9 479.6 135.6 477.4 136.4C475.2 137.1 472.1 138.1 470.1 139.0C468.0 139.9 466.9 141.9 465.0 141.9C463.0 141.9 459.6 140.9 458.4 139.0C457.2 137.0 457.7 132.9 457.7 130.2C457.7 127.6 459.5 125.4 458.4 122.9C457.3 120.5 452.8 117.7 451.1 115.6C449.4 113.6 447.4 111.7 448.2 110.5Z"/><path d="M509.9 -4.7C505.6 -2.3 504.7 5.0 502.3 9.3C499.9 13.6 498.4 17.4 495.3 20.9C492.2 24.4 486.6 27.7 483.7 30.2C480.8 32.8 479.3 33.3 477.9 36.0C476.6 38.8 475.6 43.2 475.6 46.5C475.6 49.8 476.6 53.7 477.9 55.8C479.3 57.9 481.4 59.3 483.7 59.3C486.0 59.3 489.7 56.6 491.9 55.8C494.0 55.0 495.3 53.5 496.5 54.7C497.7 55.8 497.9 60.3 498.8 62.8C499.8 65.3 500.8 68.2 502.3 69.8C503.9 71.3 506.6 72.9 508.1 72.1C509.7 71.3 510.5 67.8 511.6 65.1C512.8 62.4 514.3 58.9 515.1 55.8C515.9 52.7 516.6 49.0 516.3 46.5C515.9 44.0 513.0 43.6 513.0 40.7C513.0 37.8 515.0 32.0 516.3 29.1C517.6 26.2 519.0 26.2 520.9 23.3C522.9 20.3 526.7 16.3 527.9 11.6C529.1 7.0 530.9 -1.9 527.9 -4.7C524.9 -7.4 514.1 -7.0 509.9 -4.7Z"/><path d="M484.3 66.3C485.0 64.1 488.2 63.6 489.5 64.5C490.9 65.5 492.2 69.7 492.4 72.1C492.6 74.5 491.9 78.1 490.7 79.1C489.5 80.0 486.5 80.0 485.5 77.9C484.4 75.8 483.6 68.5 484.3 66.3Z"/><path d="M441.3 59.9C442.5 57.9 445.5 57.7 447.2 59.0C448.8 60.3 450.3 64.1 451.4 67.4C452.5 70.8 452.1 74.7 453.9 79.2C455.7 83.7 460.5 90.8 462.3 94.4C464.2 98.1 465.7 99.5 464.9 101.2C464.0 102.8 459.9 103.6 457.3 104.2C454.6 104.8 449.8 105.9 448.8 104.9C447.9 103.8 451.7 99.5 451.4 97.8C451.1 96.0 448.3 97.5 447.2 94.4C446.0 91.3 445.9 83.2 444.6 79.2C443.4 75.3 440.1 74.0 439.6 70.8C439.0 67.6 440.0 61.8 441.3 59.9Z"/><path d="M429.5 80.1C431.2 78.6 435.9 76.9 437.9 77.9C439.9 78.9 441.3 83.2 441.3 86.0C441.3 88.7 439.7 93.2 437.9 94.4C436.1 95.7 432.1 94.8 430.3 93.6C428.5 92.3 427.4 89.1 427.3 86.8C427.1 84.6 427.7 81.6 429.5 80.1Z"/><path d="M485.7 144.2C486.2 143.2 488.4 143.6 489.0 144.7C489.6 145.8 489.7 149.8 489.2 150.8C488.8 151.8 486.8 151.9 486.3 150.8C485.7 149.7 485.3 145.2 485.7 144.2Z"/><path d="M498.9 157.9C499.8 157.2 505.1 156.8 506.5 157.3C508.0 157.9 508.5 160.4 507.6 161.2C506.7 161.9 502.5 162.3 501.1 161.7C499.6 161.2 497.9 158.6 498.9 157.9Z"/></clipPath>
<g clip-path="url(#lc)"><rect x="60" y="-10" width="225" height="150" filter="url(#sp)" mask="url(#spm)"/></g>
<g filter="url(#b3)" fill="none" stroke="#d9d8d0" stroke-width="4.5" stroke-linecap="round" opacity="0.3">
<path d="M6.7 20.2C9.8 23.3 19.4 32.9 25.3 38.8C31.2 44.7 36.8 49.5 42.2 55.6C47.5 61.8 52.0 68.6 57.3 75.9C62.7 83.2 69.7 92.5 74.2 99.5C78.7 106.5 82.1 113.3 84.3 118.0C86.6 122.8 87.1 126.3 87.7 128.0"/>
<path d="M33.7 10.1C37.1 15.7 47.8 33.4 54.0 43.8C60.1 54.2 65.2 64.1 70.8 72.5C76.4 80.9 82.9 87.1 87.7 94.4C92.5 101.7 97.5 112.7 99.5 116.3"/>
<path d="M79.2 134.7C80.6 138.4 84.0 150.5 87.7 156.7C91.3 162.8 96.7 167.3 101.2 171.8C105.7 176.3 110.2 177.7 114.7 183.6C119.1 189.5 124.2 200.8 128.1 207.2C132.1 213.7 134.3 218.8 138.3 222.4C142.2 226.1 149.5 228.0 151.7 229.2"/>
<path d="M101.2 131.4C102.8 134.7 107.9 144.9 111.3 151.6C114.7 158.3 119.7 168.5 121.4 171.8"/>
<path d="M216.2 276.2C215.6 279.0 212.5 287.2 212.8 293.1C213.1 299.0 215.0 305.5 217.8 311.6C220.6 317.8 225.4 324.3 229.6 330.2C233.9 336.1 240.5 341.1 243.1 347.0C245.8 352.9 245.5 359.4 245.7 365.6C245.8 371.7 244.3 380.9 244.0 384.0"/>
<path d="M504.7 7.0C502.7 10.1 496.5 20.3 493.0 25.6C489.5 30.8 485.7 34.1 483.7 38.4C481.8 42.6 481.8 49.0 481.4 51.2"/>
<path d="M295.7 0.8C296.3 3.1 297.8 9.8 299.1 14.3C300.5 18.8 302.1 24.0 303.8 27.8C305.6 31.7 307.7 35.2 309.7 37.4C311.8 39.7 313.9 40.9 316.0 41.3C318.1 41.7 321.3 39.9 322.4 39.6"/>
<path d="M295.7 0.8C296.3 3.1 297.8 9.8 299.1 14.3C300.5 18.8 302.1 24.0 303.8 27.8C305.6 31.7 307.7 35.2 309.7 37.4C311.8 39.7 314.9 40.7 316.0 41.3"/>
</g>
<g filter="url(#b1)">
<path fill="#cddcf7" d="M72.5 5.1C73.3 3.0 80.6 2.0 84.3 2.5C88.0 3.1 93.3 6.2 94.4 8.4C95.5 10.7 93.6 14.9 91.0 16.0C88.5 17.1 82.3 17.0 79.2 15.2C76.2 13.3 71.7 7.2 72.5 5.1Z"/>
<path fill="#cddcf7" d="M94.4 36.2C96.0 34.7 102.0 32.6 104.5 32.9C107.1 33.2 110.2 36.1 109.6 37.9C109.0 39.8 103.6 43.5 101.2 44.2C98.8 44.9 96.4 43.5 95.3 42.2C94.1 40.8 92.9 37.8 94.4 36.2Z"/>
<path fill="#cddcf7" d="M107.9 53.6C108.8 52.5 115.6 51.2 118.0 51.4C120.4 51.6 123.1 53.7 122.2 54.8C121.4 55.9 115.4 58.4 113.0 58.2C110.6 58.0 107.1 54.7 107.9 53.6Z"/>
<path fill="#cddcf7" d="M134.0 59.9C134.6 57.6 138.0 56.6 139.1 58.2C140.2 59.7 141.3 66.9 140.8 69.1C140.2 71.4 136.9 73.2 135.7 71.7C134.6 70.1 133.5 62.1 134.0 59.9Z"/>
<path fill="#cddcf7" d="M145.0 64.9C145.7 62.8 149.8 61.8 150.9 63.2C152.0 64.6 152.4 71.2 151.7 73.3C151.0 75.5 147.8 77.3 146.7 75.9C145.6 74.5 144.3 67.0 145.0 64.9Z"/>
<path fill="#cddcf7" d="M72.5 0.0C74.5 -0.4 85.7 -0.3 87.7 0.0C89.6 0.3 86.3 1.6 84.3 2.0C82.3 2.4 77.8 2.7 75.9 2.4C73.9 2.0 70.5 0.4 72.5 0.0Z"/>
<path fill="#dfe8f8" d="M166.0 114.0C167.7 112.8 173.7 111.7 178.0 112.0C182.3 112.3 189.8 114.5 192.0 116.0C194.2 117.5 193.3 120.3 191.0 121.0C188.7 121.7 181.8 120.3 178.0 120.0C174.2 119.7 170.0 120.0 168.0 119.0C166.0 118.0 164.3 115.2 166.0 114.0Z"/>
<path fill="#dfe8f8" d="M182.0 123.0C182.7 120.5 185.3 120.5 186.0 123.0C186.7 125.5 186.7 135.5 186.0 138.0C185.3 140.5 182.7 140.5 182.0 138.0C181.3 135.5 181.3 125.5 182.0 123.0Z"/>
<path fill="#dfe8f8" d="M191.0 122.0C192.2 121.0 197.2 121.3 199.0 123.0C200.8 124.7 202.5 130.2 202.0 132.0C201.5 133.8 197.7 134.5 196.0 134.0C194.3 133.5 192.8 131.0 192.0 129.0C191.2 127.0 189.8 123.0 191.0 122.0Z"/>
<path fill="#dfe8f8" d="M197.0 138.0C198.7 136.8 206.8 135.0 209.0 135.0C211.2 135.0 211.7 136.8 210.0 138.0C208.3 139.2 201.2 142.0 199.0 142.0C196.8 142.0 195.3 139.2 197.0 138.0Z"/>
<path fill="#dfe8f8" d="M210.0 131.0C211.5 130.2 218.2 128.7 220.0 129.0C221.8 129.3 222.5 132.2 221.0 133.0C219.5 133.8 212.8 134.3 211.0 134.0C209.2 133.7 208.5 131.8 210.0 131.0Z"/>
</g>
<g filter="url(#b2)" fill="none" stroke="#a2a29d" stroke-width="1.2">
<path d="M18.2 0.0L18.2 48.9L25.3 50.6L33.7 52.3L40.5 55.6L42.2 64.1L48.9 72.5L52.3 79.2"/>
<path stroke="#b4b4b0" stroke-width="1.4" d="M79.0 109.3L191.0 109.3"/>
<path d="M200.7 140.3L210.0 135.6L219.3 132.5L225.5 127.9L239.5 124.8L241.0 118.6L247.2 118.6L248.8 127.9"/>
<path d="M94.4 177.7L109.6 182.0L121.4 181.1L131.5 188.7L139.9 188.7L148.4 198.8L153.4 201.3"/>
<path d="M169.9 232.5L174.5 231.0L174.5 227.9L179.2 227.9L179.9 224.8"/>
<path d="M174.5 231.0L179.2 237.2L183.8 238.7L190.0 240.3L196.2 239.5"/>
<path d="M233.0 256.0L246.5 266.1L248.2 272.9L241.4 279.6L241.4 288.0L238.1 294.8"/>
<path d="M248.2 272.9L253.2 281.3L261.7 277.9L268.4 271.2L273.5 279.6L283.6 277.9L290.3 274.5L295.4 271.2"/>
<path d="M268.4 271.2L268.4 261.1"/>
<path d="M281.9 267.8L283.6 277.9"/>
<path d="M290.3 269.5L290.3 274.5"/>
<path d="M211.1 283.0L222.9 286.3L224.6 291.4L216.2 298.2L209.4 299.8"/>
<path d="M224.6 291.4L238.1 294.8L239.8 299.8L231.3 301.5L228.0 308.3L233.0 315.0L241.4 316.7L244.8 320.1"/>
<path d="M244.8 320.1L254.9 318.4L256.6 323.4L268.4 326.8L273.5 335.2L275.2 347.0L268.4 348.7L265.0 353.8"/>
<path d="M244.8 320.1L243.1 331.9L246.5 340.3L243.1 350.4"/>
<path d="M246.5 340.3L249.9 350.4L248.2 360.5L244.8 374.0L243.1 384.0"/>
<path d="M265.0 353.8L275.2 350.4L278.5 357.2L290.3 360.5L292.0 370.7L281.9 374.0L275.2 370.7L265.0 363.9L265.0 353.8"/>
<path d="M281.9 374.0L288.7 377.4L283.6 384.0"/>
<path d="M453.9 166.8L453.1 177.7L445.5 185.3L433.7 190.4L432.8 200.5"/>
<path d="M432.8 200.5L420.2 201.3L418.5 216.5L405.0 217.4"/>
<path d="M485.9 161.7L485.1 171.8L489.3 178.6L490.2 203.9L496.1 210.6"/>
<path d="M432.8 200.5L471.6 224.1L496.1 210.6L507.9 212.3L520.0 215.7"/>
<path d="M439.6 204.7L440.4 235.9L420.2 236.8L406.7 233.4"/>
<path d="M471.6 224.1L472.5 232.5L460.7 239.3L447.2 244.3L442.1 252.8L433.7 256.0"/>
<path d="M460.7 239.3L467.4 246.0L485.9 244.3L501.1 242.7L507.9 256.0"/>
<path d="M507.9 212.3L506.2 229.2L501.1 242.7"/>
<path d="M406.7 233.4L416.8 235.9L421.9 244.3L413.4 246.0L406.7 244.3"/>
<path d="M421.9 244.3L426.9 252.8L433.7 256.0"/>
<path d="M433.7 256.0L435.4 271.2"/>
<path d="M448.8 256.0L449.7 269.5"/>
<path d="M462.3 256.0L464.0 267.8"/>
<path d="M467.4 256.0L466.6 267.0"/>
<path d="M507.9 256.0L497.7 262.7L489.3 267.8L487.6 274.5"/>
<path d="M489.3 277.9L502.8 277.9L520.0 274.5"/>
<path d="M494.4 289.7L504.5 288.0L506.2 296.5L497.7 299.8"/>
<path d="M506.2 296.5L514.6 310.0L520.0 308.3"/>
<path d="M497.7 299.8L504.5 301.5L512.9 306.6"/>
<path d="M496.1 339.5L520.0 340.3"/>
<path d="M518.0 340.3L518.8 360.5L520.0 374.0"/>
<path d="M508.1 3.5L502.3 15.1L497.7 25.6L496.5 38.4L497.1 48.8"/>
<path d="M432.8 141.9L435.0 147.8L431.4 153.6L432.8 159.4"/>
<path d="M510.9 102.6L516.4 105.9L520.0 104.8"/>
<path d="M507.6 115.7L513.1 117.9L520.0 116.8"/>
<path d="M512.0 121.2L515.3 126.7L520.0 128.9"/>
<path d="M514.2 131.0L516.4 137.6L520.0 142.0"/>
</g>
<g font-family="'Liberation Sans', sans-serif" filter="url(#b2)">
<text x="111.6" y="103.3" font-size="24.0" textLength="86.7" lengthAdjust="spacingAndGlyphs" fill="#7a7a7a" opacity="1">NORTH</text>
<text x="102.0" y="131.0" font-size="24.0" textLength="106.0" lengthAdjust="spacingAndGlyphs" fill="#7a7a7a" opacity="1">AMERICA</text>
<text x="243.7" y="344.5" font-size="24.0" textLength="82.1" lengthAdjust="spacingAndGlyphs" fill="#7a7a7a" opacity="1">SOUTH</text>
<text x="232.0" y="372.4" font-size="24.0" textLength="106.4" lengthAdjust="spacingAndGlyphs" fill="#7a7a7a" opacity="1">AMERICA</text>
<text x="475.6" y="97.8" font-size="24.0" textLength="101.4" lengthAdjust="spacingAndGlyphs" fill="#7a7a7a" opacity="1">EUROPE</text>
<text x="501.2" y="281.3" font-size="24.0" textLength="85.3" lengthAdjust="spacingAndGlyphs" fill="#7a7a7a" opacity="1">AFRICA</text>
<text x="307.6" y="214.8" font-size="10.5" textLength="49.2" lengthAdjust="spacing" fill="#5f7bb0" opacity="0.9" font-style="italic">Atlantic</text>
<text x="313.7" y="227.9" font-size="10.5" textLength="38.5" lengthAdjust="spacing" fill="#5f7bb0" opacity="0.9" font-style="italic">Ocean</text>
<text x="-17.5" y="253.2" font-size="10.5" textLength="43.3" lengthAdjust="spacing" fill="#5f7bb0" opacity="0.9" font-style="italic">Pacific</text>
<text x="-14.6" y="266.2" font-size="10.5" textLength="38.5" lengthAdjust="spacing" fill="#5f7bb0" opacity="0.9" font-style="italic">Ocean</text>
</g>
<g filter="url(#b2)">
<g fill="#ff9e0a">
<circle cx="74.0" cy="108.5" r="4.8"/>
<circle cx="77.6" cy="116.0" r="4.8"/>
<circle cx="75.5" cy="125.4" r="4.8"/>
<circle cx="73.8" cy="132.6" r="4.8"/>
<circle cx="89.1" cy="123.4" r="4.8"/>
<circle cx="95.2" cy="133.9" r="4.8"/>
<circle cx="107.3" cy="123.4" r="4.8"/>
<circle cx="119.1" cy="137.0" r="4.8"/>
<circle cx="75.6" cy="158.3" r="4.8"/>
<circle cx="125.3" cy="168.4" r="4.8"/>
<circle cx="182.2" cy="140.2" r="4.8"/>
<circle cx="228.0" cy="124.0" r="4.8"/>
<circle cx="149.2" cy="224.1" r="4.8"/>
<circle cx="233.4" cy="261.5" r="4.8"/>
<circle cx="242.3" cy="253.8" r="4.8"/>
<circle cx="249.7" cy="252.4" r="4.8"/>
<circle cx="259.0" cy="251.1" r="4.8"/>
<circle cx="311.4" cy="358.9" r="4.8"/>
<circle cx="319.9" cy="357.2" r="4.8"/>
<circle cx="324.1" cy="358.9" r="4.8"/>
<circle cx="432.8" cy="95.2" r="4.8"/>
<circle cx="455.5" cy="100.7" r="4.8"/>
<circle cx="454.0" cy="117.4" r="4.8"/>
<circle cx="463.1" cy="133.9" r="4.8"/>
<circle cx="466.0" cy="143.1" r="4.8"/>
<circle cx="476.2" cy="135.3" r="4.8"/>
<circle cx="447.9" cy="147.5" r="4.8"/>
<circle cx="429.9" cy="153.6" r="4.8"/>
<circle cx="440.4" cy="159.4" r="4.8"/>
<circle cx="468.6" cy="101.0" r="4.8"/>
<circle cx="473.0" cy="101.8" r="4.8"/>
<circle cx="471.5" cy="108.3" r="4.8"/>
<circle cx="482.5" cy="94.5" r="4.8"/>
<circle cx="479.6" cy="101.0" r="4.8"/>
<circle cx="481.8" cy="111.3" r="4.8"/>
<circle cx="487.6" cy="111.3" r="4.8"/>
<circle cx="494.9" cy="112.7" r="4.8"/>
<circle cx="500.7" cy="114.2" r="4.8"/>
<circle cx="507.3" cy="118.8" r="4.8"/>
<circle cx="497.1" cy="98.1" r="4.8"/>
<circle cx="504.4" cy="99.3" r="4.8"/>
<circle cx="500.7" cy="90.8" r="4.8"/>
<circle cx="497.5" cy="74.8" r="4.8"/>
<circle cx="482.5" cy="118.6" r="4.8"/>
<circle cx="487.6" cy="124.4" r="4.8"/>
<circle cx="491.2" cy="129.5" r="4.8"/>
<circle cx="482.5" cy="128.8" r="4.8"/>
<circle cx="473.0" cy="125.1" r="4.8"/>
<circle cx="508.1" cy="32.0" r="4.8"/>
<circle cx="490.1" cy="56.4" r="4.8"/>
</g><g fill="#7b68ee">
<path d="M80.3 128.2L84.5 135.2L76.1 135.2Z"/>
<path d="M197.3 135.7L201.5 142.7L193.1 142.7Z"/>
<path d="M230.2 120.3L235.9 129.8L224.5 129.8Z"/>
<path d="M236.3 135.4L240.5 142.4L232.1 142.4Z"/>
<path d="M177.6 183.9L181.8 190.9L173.4 190.9Z"/>
<path d="M313.1 358.1L317.3 365.1L308.9 365.1Z"/>
<path d="M452.3 83.3L456.5 90.3L448.1 90.3Z"/>
<path d="M473.4 88.0L478.9 97.1L467.9 97.1Z"/>
<path d="M485.4 81.8L489.6 88.8L481.2 88.8Z"/>
<path d="M500.4 88.0L505.9 97.1L494.9 97.1Z"/>
<path d="M486.1 99.7L491.6 108.8L480.6 108.8Z"/>
<path d="M465.7 105.5L471.2 114.6L460.2 114.6Z"/>
<path d="M471.8 116.8L476.0 123.8L467.6 123.8Z"/>
<path d="M478.1 120.3L482.3 127.3L473.9 127.3Z"/>
<path d="M497.5 126.3L501.7 133.3L493.3 133.3Z"/>
<path d="M504.8 142.8L509.0 149.8L500.6 149.8Z"/>
<path d="M440.1 131.2L444.3 138.2L435.9 138.2Z"/>
<path d="M497.5 71.7L501.7 78.7L493.3 78.7Z"/>
<path d="M495.6 61.1L499.8 68.2L491.4 68.2Z"/>
<path d="M491.3 47.3L495.5 54.3L487.1 54.3Z"/>
<path d="M515.5 50.3L519.7 57.3L511.3 57.3Z"/>
</g><g fill="#14eb9b">
<path d="M76.2 110.4L77.8 114.1L81.9 114.5L78.9 117.3L79.7 121.3L76.2 119.2L72.7 121.3L73.5 117.3L70.5 114.5L74.6 114.1Z"/>
<path d="M458.4 91.1L460.0 94.8L464.1 95.2L461.1 98.0L461.9 102.0L458.4 99.9L454.9 102.0L455.7 98.0L452.7 95.2L456.8 94.8Z"/>
</g></g>
<rect x="0" y="0" width="1" height="384" fill="#e4eefc" opacity="0.8"/>
</svg>
<!--mapend--></div>

<div id="bottom" class="abs"></div>
<svg class="abs" style="left:394px;top:787.500px" width="20" height="13" viewBox="0 0 20 13" stroke="#1a1a1a" stroke-width="1.500" fill="none"><path d="M1.300 2L10 10.700L18.700 2"/></svg>
<div id="input" class="abs"></div>
<div id="caret" class="abs"></div>
</body>
</html>
